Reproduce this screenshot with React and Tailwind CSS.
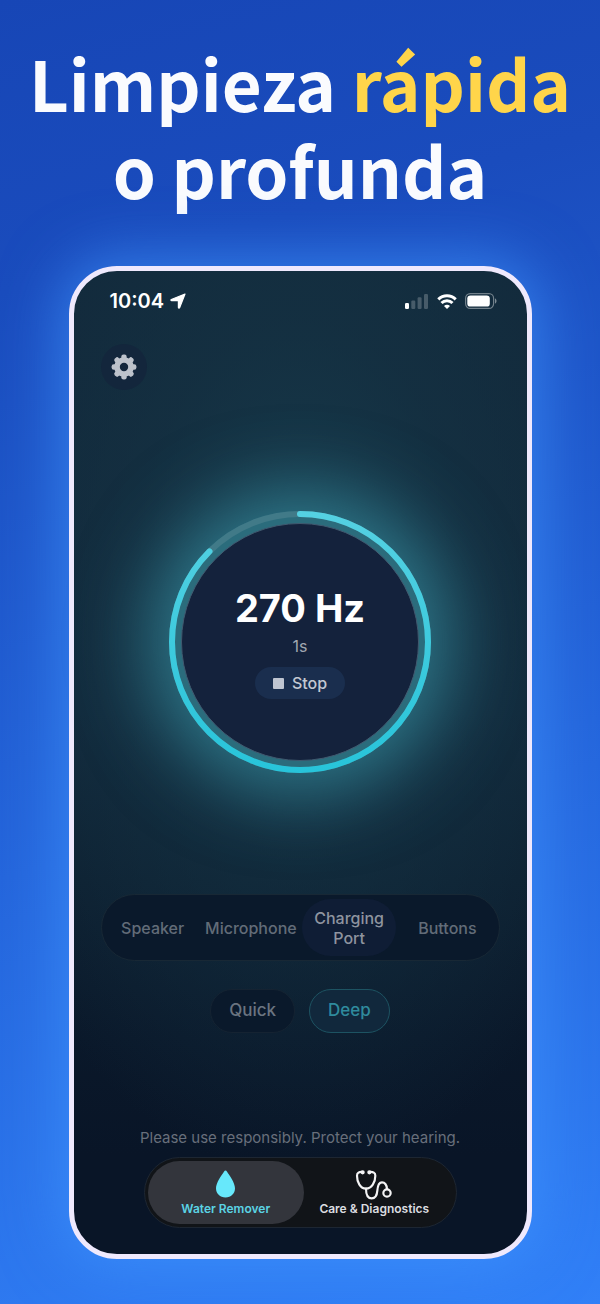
import { useState } from "react";

const TARGETS = ["Speaker", "Microphone", "Charging Port", "Buttons"];
const MODES = ["Quick", "Deep"];
const TEETH = [0, 45, 90, 135, 180, 225, 270, 315];

function LocationIcon() {
  return (
    <svg viewBox="0 0 16 16" className="size-4" fill="#fff" stroke="#fff" strokeWidth="1.200" strokeLinejoin="round" aria-hidden="true">
      <path d="M15 1 9.600 14.700c-.3.6-1.200.5-1.200-.3V8.600c0-.6-.3-.9-.9-.9H1.600c-.8 0-.9-.9-.3-1.200z" />
    </svg>
  );
}

function SignalIcon() {
  return (
    <svg viewBox="0 0 24 15" className="h-[15px] w-6" fill="#fff" aria-hidden="true">
      <rect x="0" y="9" width="4" height="6" rx="1.200" />
      <g opacity="0.22">
        <rect x="6.300" y="6.500" width="4" height="8.500" rx="1.200" />
        <rect x="12.600" y="3.300" width="4" height="11.700" rx="1.200" />
        <rect x="19" y="0" width="4" height="15" rx="1.200" />
      </g>
    </svg>
  );
}

function WifiIcon() {
  return (
    <svg viewBox="0 0 20 15" className="h-[15px] w-5" fill="none" stroke="#fff" strokeWidth="3" aria-hidden="true">
      <path d="M1.300 5.400a12.300 12.300 0 0 1 17.400 0" />
      <path d="M4.500 9a7.800 7.800 0 0 1 11 0" />
      <path d="M10 15 7 12a4.200 4.200 0 0 1 6 0z" fill="#fff" stroke="none" />
    </svg>
  );
}

function BatteryIcon() {
  return (
    <svg viewBox="0 0 32 16" className="h-4 w-8" aria-hidden="true">
      <rect x="0.600" y="0.600" width="28" height="14.800" rx="4.600" fill="none" stroke="#fff" strokeOpacity="0.4" strokeWidth="1.200" />
      <rect x="2.300" y="2.400" width="22.500" height="11.200" rx="3.200" fill="#fff" />
      <path d="M30 5.500c2 .6 2 4.400 0 5z" fill="#fff" fillOpacity="0.45" />
    </svg>
  );
}

function GearIcon() {
  return (
    <svg viewBox="-13 -13 26 26" className="size-[26px]" aria-hidden="true">
      <g fill="#bdc2cb">
        {TEETH.map((a) => (
          <rect key={a} x="-2.700" y="-12.400" width="5.400" height="7" rx="2.200" transform={`rotate(${a})`} />
        ))}
      </g>
      <circle r="7" fill="none" stroke="#bdc2cb" strokeWidth="5.600" />
    </svg>
  );
}

function DropIcon() {
  return (
    <svg viewBox="0 0 19 28" className="h-7 w-[19px]" fill="#67e8fb" aria-hidden="true">
      <path d="M9.500 0.500c.6 0 1 .3 1.400.9C13.500 5.500 19 12.500 19 18.300c0 5.300-4 9.200-9.500 9.200S0 23.600 0 18.300C0 12.500 5.500 5.500 8.100 1.400c.4-.6.8-.9 1.400-.9z" />
    </svg>
  );
}

function StethoscopeIcon() {
  return (
    <svg
      viewBox="675 149 114 90"
      className="h-[30px] w-[38px]"
      fill="none"
      stroke="#f4f4f5"
      strokeWidth="6.500"
      strokeLinecap="round"
      strokeLinejoin="round"
      aria-hidden="true"
    >
      <path d="M698 155c-11-1-17 2-17 11 0 20 10 39 27 39s28-19 28-39c0-9-6-12-18-11" />
      <path d="M708 205c0 18 5 29 17 29 12 0 16-10 17-23 1-15 4-25 14-25 9 0 14 8 15 20" />
      <circle cx="771" cy="218" r="11" />
      <circle cx="698" cy="156" r="3" />
      <circle cx="718" cy="156" r="3" />
    </svg>
  );
}

function Dial({ percent, children }) {
  return (
    <div className="relative mx-auto mt-[121px] size-[262px] rounded-full bg-[#2b6c7c] shadow-[0_0_76px_20px_rgba(60,158,176,0.66)]">
      <svg viewBox="0 0 262 262" className="absolute inset-0 size-full" fill="none" aria-hidden="true">
        <defs>
          <linearGradient id="ring" gradientUnits="userSpaceOnUse" x1="0" y1="0" x2="262" y2="0">
            <stop offset="0" stopColor="#27c4da" />
            <stop offset="1" stopColor="#55d1e2" />
          </linearGradient>
        </defs>
        <circle cx="131" cy="131" r="128" stroke="#417a88" strokeWidth="6" />
        <circle
          cx="131"
          cy="131"
          r="128"
          stroke="url(#ring)"
          strokeWidth="6"
          strokeLinecap="round"
          pathLength="100"
          strokeDasharray={`${percent} 100`}
          transform="rotate(-90 131 131)"
        />
      </svg>
      <div className="absolute inset-3 flex flex-col items-center rounded-full border border-[#40596f] bg-[#14223c] pt-[63px]">
        {children}
      </div>
    </div>
  );
}

export default function App() {
  const [target, setTarget] = useState("Charging Port");
  const [mode, setMode] = useState("Deep");

  return (
    <main className="flex min-h-screen flex-col items-center bg-[linear-gradient(165deg,#1746b6_0%,#1a4cbd_20%,#2566dc_60%,#3180f7_100%)] px-4 pt-[39px] pb-[45px] font-['Inter',sans-serif]">
      <h1 className="text-center font-['Noto_Sans_CJK_SC',sans-serif] text-[69px] leading-[87px] font-bold whitespace-nowrap text-[#fafbfe]">
        Limpieza <span className="text-[#ffd54a]">rápida</span>
        <br />o profunda
      </h1>

      {/* Phone */}
      <div className="mt-[53px] w-full max-w-[463px] rounded-[48px] border-[5px] border-[#efe9fd] bg-[radial-gradient(ellipse_80%_60%_at_50%_32%,#173b4c_0%,#15344599_45%,#15344500_100%),linear-gradient(180deg,#12283a_0%,#11273a_45%,#0d1f30_62%,#0a182a_78%,#091527_90%,#091527_100%)] px-[27px] pt-5 pb-[26px] shadow-[0_0_60px_8px_rgba(64,150,255,0.65)]">
        {/* Status bar */}
        <div className="flex h-5 items-center justify-between pr-[3px] pl-[9px] text-white">
          <div className="flex items-center gap-1.5">
            <span className="text-xl font-semibold">10:04</span>
            <LocationIcon />
          </div>
          <div className="flex items-center gap-2">
            <SignalIcon />
            <WifiIcon />
            <BatteryIcon />
          </div>
        </div>

        <button
          type="button"
          aria-label="Settings"
          className="mt-[33px] flex size-[46px] items-center justify-center rounded-full bg-[#13263c]"
        >
          <GearIcon />
        </button>

        <Dial percent={87.5}>
          <p className="text-[38px] leading-[42px] font-bold text-white">270 Hz</p>
          <p className="mt-[7px] text-base leading-5 text-[#a1a7b1]">1s</p>
          <button
            type="button"
            className="mt-[11px] flex h-8 items-center gap-2 rounded-full bg-[#1a2e4e] px-[18px] text-base font-medium text-[#c3c8d2]"
          >
            <span className="size-[11px] rounded-[1px] bg-[#bfc5d1]" />
            Stop
          </button>
        </Dial>

        {/* What to clean */}
        <div className="mt-[121px] grid h-[67px] grid-cols-4 gap-1 rounded-full border border-[#182835] bg-[#0a192b] p-1">
          {TARGETS.map((t) => (
            <button
              key={t}
              type="button"
              aria-pressed={t === target}
              onClick={() => setTarget(t)}
              className={`rounded-full text-base leading-5 font-medium ${
                t === target ? "bg-[#0f1d35] text-[#8e949f]" : "text-[#626c78]"
              }`}
            >
              {t}
            </button>
          ))}
        </div>

        <div className="mt-7 flex justify-center gap-3.5">
          {MODES.map((m) => (
            <button
              key={m}
              type="button"
              aria-pressed={m === mode}
              onClick={() => setMode(m)}
              className={`h-11 rounded-full border px-[18px] text-[17px] font-medium ${
                m === mode
                  ? "border-[#1d5362] bg-[#11283c] text-[#2f8b9d]"
                  : "border-[#152332] bg-[#0a192b] text-[#6a7480]"
              }`}
            >
              {m}
            </button>
          ))}
        </div>

        <p className="mt-[95px] text-center text-[15px] leading-5 whitespace-nowrap text-[#686f7b]">
          Please use responsibly. Protect your hearing.
        </p>

        {/* Tab bar */}
        <nav className="mx-auto mt-[9px] flex h-[71px] max-w-[313px] rounded-full border border-[#1d2632] bg-[#111418] p-[3px]">
          <a
            href="#water"
            aria-current="page"
            className="flex flex-1 flex-col items-center gap-[3px] rounded-full bg-[#33353c] pt-[9px] text-xs font-semibold text-[#5bd3e4]"
          >
            <DropIcon />
            Water Remover
          </a>
          <a
            href="#care"
            className="-ml-2 flex flex-1 flex-col items-center gap-px pt-[9px] text-xs font-semibold text-[#dcdde0]"
          >
            <StethoscopeIcon />
            Care &amp; Diagnostics
          </a>
        </nav>
      </div>
    </main>
  );
}
